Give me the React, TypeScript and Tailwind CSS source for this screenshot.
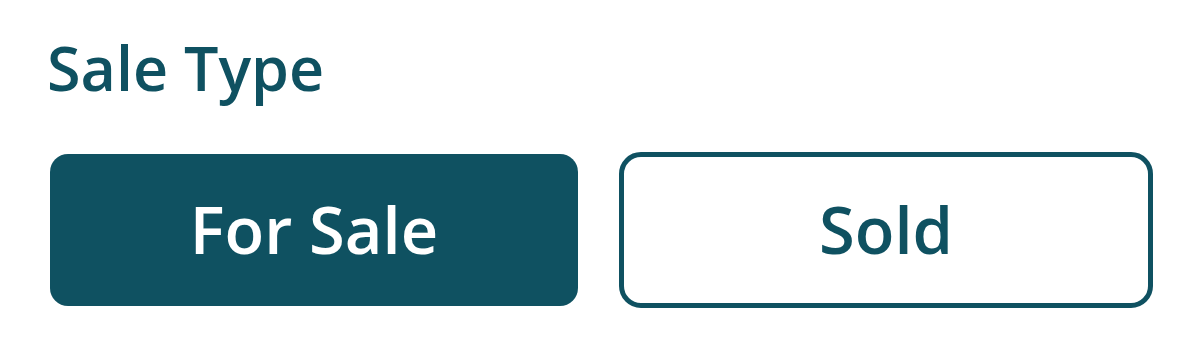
export default function App() {
  return (
    <div className="h-[362px] w-[1200px] bg-white font-['Open_Sans','Noto_Sans',sans-serif] text-[#0f5161]">
      <h2 className="pl-[47px] pt-[28px] text-[61px] font-semibold leading-[80px]">Sale Type</h2>
      <div className="mt-[44px] flex items-center">
        <button className="ml-[50px] flex h-[152px] w-[528px] items-center justify-center rounded-[18px] bg-[#0f5161] text-[65px] font-semibold text-white">
          For Sale
        </button>
        <button className="ml-[41px] flex h-[156px] w-[534px] items-center justify-center rounded-[22px] border-[5px] border-[#0f5161] bg-white text-[65px] font-semibold">
          Sold
        </button>
      </div>
    </div>
  );
}
